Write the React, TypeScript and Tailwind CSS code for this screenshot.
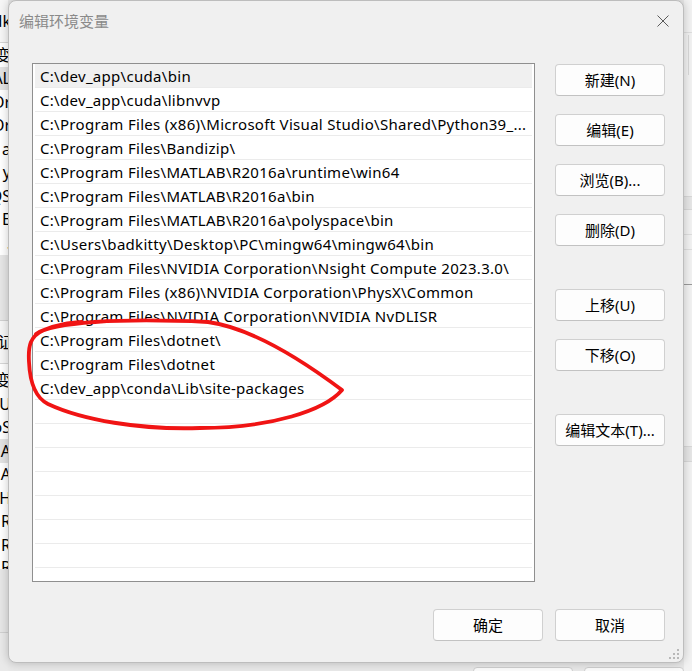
import React from "react";

const paths = [
  "C:\\dev_app\\cuda\\bin",
  "C:\\dev_app\\cuda\\libnvvp",
  "C:\\Program Files (x86)\\Microsoft Visual Studio\\Shared\\Python39_...",
  "C:\\Program Files\\Bandizip\\",
  "C:\\Program Files\\MATLAB\\R2016a\\runtime\\win64",
  "C:\\Program Files\\MATLAB\\R2016a\\bin",
  "C:\\Program Files\\MATLAB\\R2016a\\polyspace\\bin",
  "C:\\Users\\badkitty\\Desktop\\PC\\mingw64\\mingw64\\bin",
  "C:\\Program Files\\NVIDIA Corporation\\Nsight Compute 2023.3.0\\",
  "C:\\Program Files (x86)\\NVIDIA Corporation\\PhysX\\Common",
  "C:\\Program Files\\NVIDIA Corporation\\NVIDIA NvDLISR",
  "C:\\Program Files\\dotnet\\",
  "C:\\Program Files\\dotnet",
  "C:\\dev_app\\conda\\Lib\\site-packages",
];

const emptyRows = Array.from({ length: 8 });

// fragments of the window behind the dialog (left edge)
const upperRows = [
  { text: "变", hi: false },
  { text: "AL", hi: true },
  { text: "Or", hi: false },
  { text: "Or", hi: false },
  { text: "a", hi: false },
  { text: "y", hi: false },
  { text: "QS", hi: false },
  { text: "E", hi: false },
  { text: ".", hi: false },
];

const lowerRows = [
  { text: "变", hi: false },
  { text: "IU", hi: false },
  { text: "oS", hi: false },
  { text: "A", hi: true },
  { text: "A", hi: false },
  { text: "H", hi: false },
  { text: "R", hi: false },
  { text: "R", hi: false },
];

function StripRow({ text, hi }: { text: string; hi: boolean }) {
  return (
    <div
      className={`h-[23.5px] flex items-center justify-end whitespace-nowrap ${
        hi ? "bg-[#e3e3e3]" : "bg-white"
      }`}
    >
      <span className="mr-[-3px]">{text}</span>
    </div>
  );
}

function WinButton({ label, className = "" }: { label: string; className?: string }) {
  return (
    <button
      className={`h-[32px] w-[110px] rounded-[4px] border border-[#d0d0d0] border-b-[#c2c2c2] bg-[#fdfdfd] text-[15px] text-black flex items-center justify-center ${className}`}
    >
      {label}
    </button>
  );
}

function ResizeGrip() {
  return (
    <svg width="12" height="12" viewBox="0 0 12 12" className="absolute right-[2px] bottom-[1px]">
      <rect x="8" y="0" width="2" height="2" fill="#b8b8b8" />
      <rect x="4" y="4" width="2" height="2" fill="#b8b8b8" />
      <rect x="8" y="4" width="2" height="2" fill="#b8b8b8" />
      <rect x="0" y="8" width="2" height="2" fill="#b8b8b8" />
      <rect x="4" y="8" width="2" height="2" fill="#b8b8b8" />
      <rect x="8" y="8" width="2" height="2" fill="#b8b8b8" />
    </svg>
  );
}

export default function App() {
  return (
    <div className="relative w-[692px] h-[671px] overflow-hidden grid grid-cols-[8px_676px_8px] grid-rows-[663px_8px] bg-[#e8e8e8] font-['Noto_Sans','Noto_Sans_CJK_SC',sans-serif]">
      {/* window behind, left edge */}
      <div className="col-start-1 row-start-1 row-span-2 flex flex-col overflow-hidden bg-[#e6e6e6] text-[16px] text-black leading-none">
        <div className="h-[43px] shrink-0 bg-[#f6f6f6] border-b border-[#d6d6d6] flex items-center justify-end whitespace-nowrap">
          <span className="mr-[-3px]">dk</span>
        </div>
        {upperRows.map((r, i) => (
          <StripRow key={i} text={r.text} hi={r.hi} />
        ))}
        <div className="h-[66px] shrink-0 bg-[#e6e6e6] border-b border-[#d0d0d0]" />
        <div className="h-[43px] shrink-0 bg-[#f6f6f6] border-b border-[#d6d6d6] flex items-center justify-end whitespace-nowrap">
          <span className="mr-[-6px]">证</span>
        </div>
        <div className="pt-[5px] bg-white flex flex-col">
          {lowerRows.map((r, i) => (
            <StripRow key={i} text={r.text} hi={r.hi} />
          ))}
          <div className="h-[12px] overflow-hidden flex justify-end items-start whitespace-nowrap bg-white">
            <span className="mr-[-3px] mt-[2px]">R</span>
          </div>
        </div>
        <div className="h-[64px] shrink-0 bg-[#e6e6e6] border-b border-[#d0d0d0]" />
        <div className="flex-1 bg-[#e9e9e9]" />
      </div>

      {/* dialog */}
      <div className="col-start-2 row-start-1 relative z-10 flex flex-col bg-[#f0f0f0] border border-[#bdbdbd] rounded-[8px] shadow-[0_0_10px_rgba(0,0,0,0.22)]">
        <div className="h-[40px] flex items-center justify-between pl-[10px] pr-[14px]">
          <span className="text-[15px] text-[#8a8a8a]">编辑环境变量</span>
          <svg width="12" height="12" viewBox="0 0 12 12">
            <path d="M0.5 0.5 L11.5 11.5 M11.5 0.5 L0.5 11.5" stroke="#5a5a5a" strokeWidth="1" />
          </svg>
        </div>

        <div className="flex pl-[23px] mt-[22px]">
          <div className="w-[503px] h-[519px] border border-[#8f8f8f] bg-white overflow-hidden flex flex-col text-[15px] tracking-[0.3px] text-black">
            {paths.map((p, i) => (
              <div
                key={i}
                className={`h-[24px] shrink-0 mx-[2px] border-b border-[#ebebeb] flex items-center pl-[5px] pt-[2px] whitespace-nowrap ${
                  i === 0 ? "bg-[#f0f0f0]" : ""
                }`}
              >
                {p}
              </div>
            ))}
            {emptyRows.map((_, i) => (
              <div key={i} className="h-[24px] shrink-0 mx-[2px] border-b border-[#ebebeb]" />
            ))}
          </div>

          <div className="ml-[20px] pt-[1px] flex flex-col">
            <WinButton label="新建(N)" />
            <WinButton label="编辑(E)" className="mt-[18px]" />
            <WinButton label="浏览(B)..." className="mt-[18px]" />
            <WinButton label="删除(D)" className="mt-[18px]" />
            <WinButton label="上移(U)" className="mt-[43px]" />
            <WinButton label="下移(O)" className="mt-[18px]" />
            <WinButton label="编辑文本(T)..." className="mt-[43px]" />
          </div>
        </div>

        <div className="mt-[27px] flex justify-end gap-[12px] pr-[18px]">
          <WinButton label="确定" />
          <WinButton label="取消" />
        </div>

        <ResizeGrip />
      </div>

      {/* window behind, right edge */}
      <div className="col-start-3 row-start-1 row-span-2 flex flex-col bg-[#f2f2f2] overflow-hidden">
        <div className="h-[33px] shrink-0 border-b border-[#dedede]" />
        <div className="h-[164px] shrink-0 border-b border-[#d8d8d8] flex justify-end pr-[3px]">
          <div className="w-[1px] h-[40px] mt-[2px] bg-[#d8d8d8]" />
        </div>
        <div className="h-[13px] shrink-0 bg-[#e6e6e6] border-b border-[#d8d8d8]" />
        <div className="h-[25px] shrink-0 border-b border-[#dedede]" />
        <div className="h-[15px] shrink-0 border-b border-[#dedede]" />
        <div className="h-[35px] shrink-0 border-b border-[#9a9a9a]" />
        <div className="h-[162px] shrink-0 border-b border-[#d8d8d8]" />
        <div className="h-[15px] shrink-0 bg-[#e6e6e6] border-b border-[#d8d8d8]" />
        <div className="flex-1" />
      </div>

      {/* window behind, below dialog */}
      <div className="col-start-2 row-start-2 flex items-start gap-[11px] pl-[465px] pt-[4px] bg-[#e8e8e8] overflow-hidden">
        <div className="w-[110px] h-[10px] rounded-t-[4px] border border-[#cfcfcf] bg-[#fbfbfb]" />
        <div className="w-[110px] h-[10px] rounded-t-[4px] border border-[#cfcfcf] bg-[#fbfbfb]" />
      </div>

      {/* red hand-drawn mark over the list */}
      <svg
        className="absolute inset-0 z-20 pointer-events-none"
        width="692"
        height="671"
        viewBox="0 0 692 671"
      >
        <path
          d="M36 334 C 52 322, 120 318, 208 322 C 252 328, 302 360, 342 390 C 325 410, 272 428, 200 428 C 140 430, 82 420, 48 404 C 36 398, 30 384, 29 362 C 28 346, 30 336, 44 330 C 58 324, 70 323, 82 322"
          fill="none"
          stroke="#f01414"
          strokeWidth="3.8"
          strokeLinecap="round"
          strokeLinejoin="round"
        />
      </svg>
    </div>
  );
}
